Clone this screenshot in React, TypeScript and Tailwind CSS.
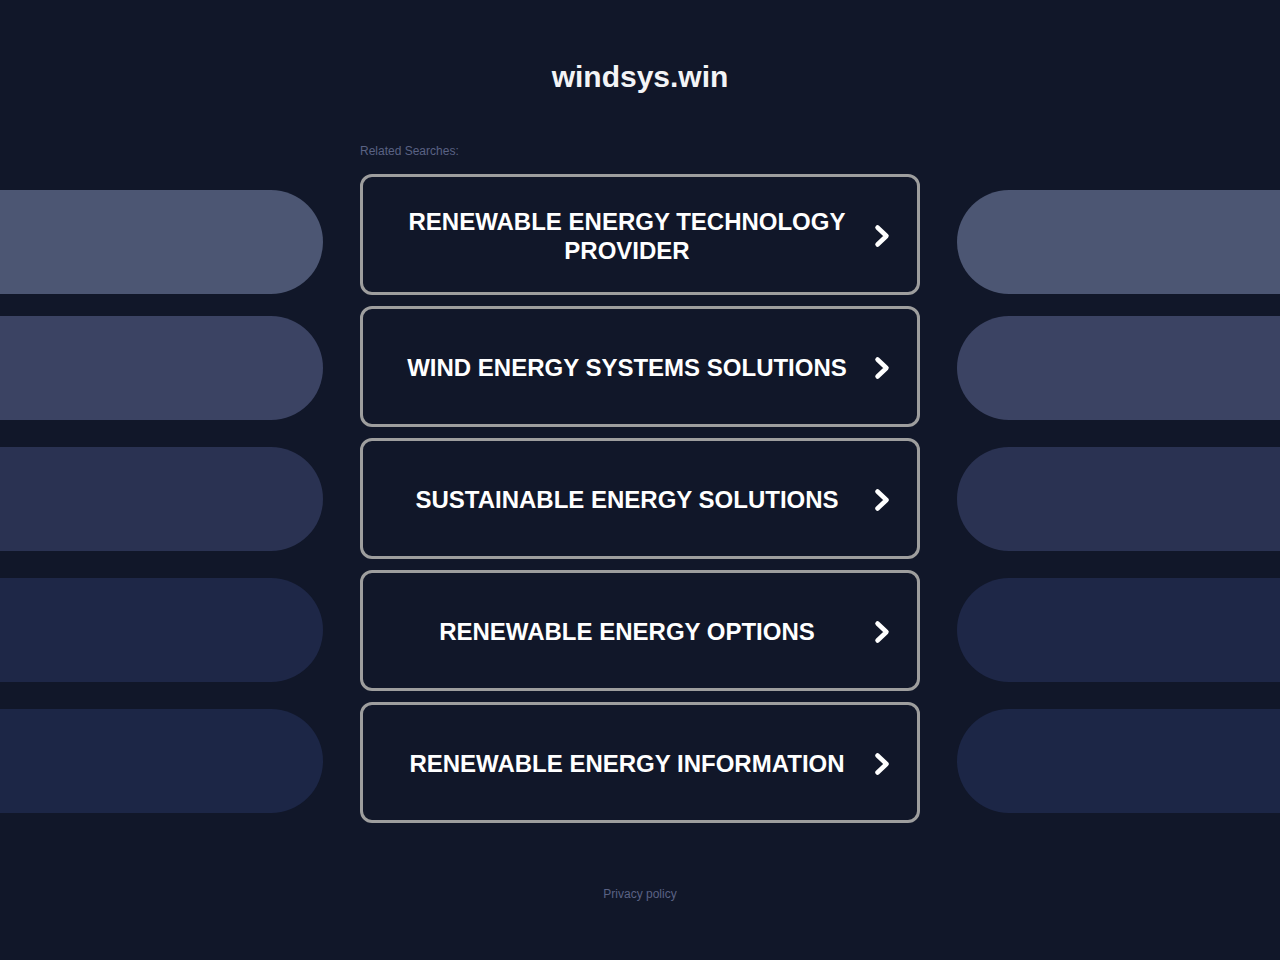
import React from 'react';

const searches = [
  'RENEWABLE ENERGY TECHNOLOGY PROVIDER',
  'WIND ENERGY SYSTEMS SOLUTIONS',
  'SUSTAINABLE ENERGY SOLUTIONS',
  'RENEWABLE ENERGY OPTIONS',
  'RENEWABLE ENERGY INFORMATION',
];

// side decoration pills, top margin + colour
const pills = [
  { mt: 'mt-0', bg: 'bg-[#4c5673]' },
  { mt: 'mt-[22px]', bg: 'bg-[#3b4363]' },
  { mt: 'mt-[27px]', bg: 'bg-[#2a3252]' },
  { mt: 'mt-[27px]', bg: 'bg-[#1e2747]' },
  { mt: 'mt-[27px]', bg: 'bg-[#1c2646]' },
];

function Chevron() {
  return (
    <svg width="20" height="26" viewBox="0 0 20 26" fill="none" className="shrink-0">
      <path d="M5.5 4.5 L14.5 13 L5.5 21.5" stroke="white" strokeWidth="4.5" strokeLinecap="round" strokeLinejoin="round" />
    </svg>
  );
}

function SidePills({ side }: { side: 'left' | 'right' }) {
  return (
    <div className="flex flex-col pt-[47px]">
      {pills.map((p, i) => (
        <div
          key={i}
          className={`h-[104px] ${p.mt} ${p.bg} ${side === 'left' ? 'rounded-r-full' : 'rounded-l-full'}`}
        />
      ))}
    </div>
  );
}

export default function App() {
  return (
    <div
      className="min-h-[960px] w-full bg-[#111729] text-white"
      style={{ fontFamily: '"Liberation Sans", Arial, sans-serif' }}
    >
      <header className="pt-[59px] text-center">
        <h1 className="text-[30px] leading-[36px] font-bold text-[#f3f4f6]">windsys.win</h1>
      </header>

      <div className="mt-[48px] grid grid-cols-[323px_1fr_323px] gap-x-[37px]">
        <SidePills side="left" />

        <div className="flex flex-col">
          <p className="text-[12px] leading-[16px] text-[#5a6284]">Related Searches:</p>
          <div className="mt-[15px] flex flex-col gap-[11px]">
            {searches.map((s) => (
              <a
                key={s}
                href="#"
                className="flex h-[121px] items-center rounded-[12px] border-[3px] border-[#9e9e9e] pl-[24px] pr-[25px] pt-[2px]"
              >
                <span className="flex-1 text-center text-[24px] leading-[29px] font-bold text-white">{s}</span>
                <span className="ml-[5px]">
                  <Chevron />
                </span>
              </a>
            ))}
          </div>
        </div>

        <SidePills side="right" />
      </div>

      <footer className="mt-[58px] pb-[59px] text-center">
        <a href="#" className="text-[12px] leading-[16px] text-[#5a6284]">Privacy policy</a>
      </footer>
    </div>
  );
}
